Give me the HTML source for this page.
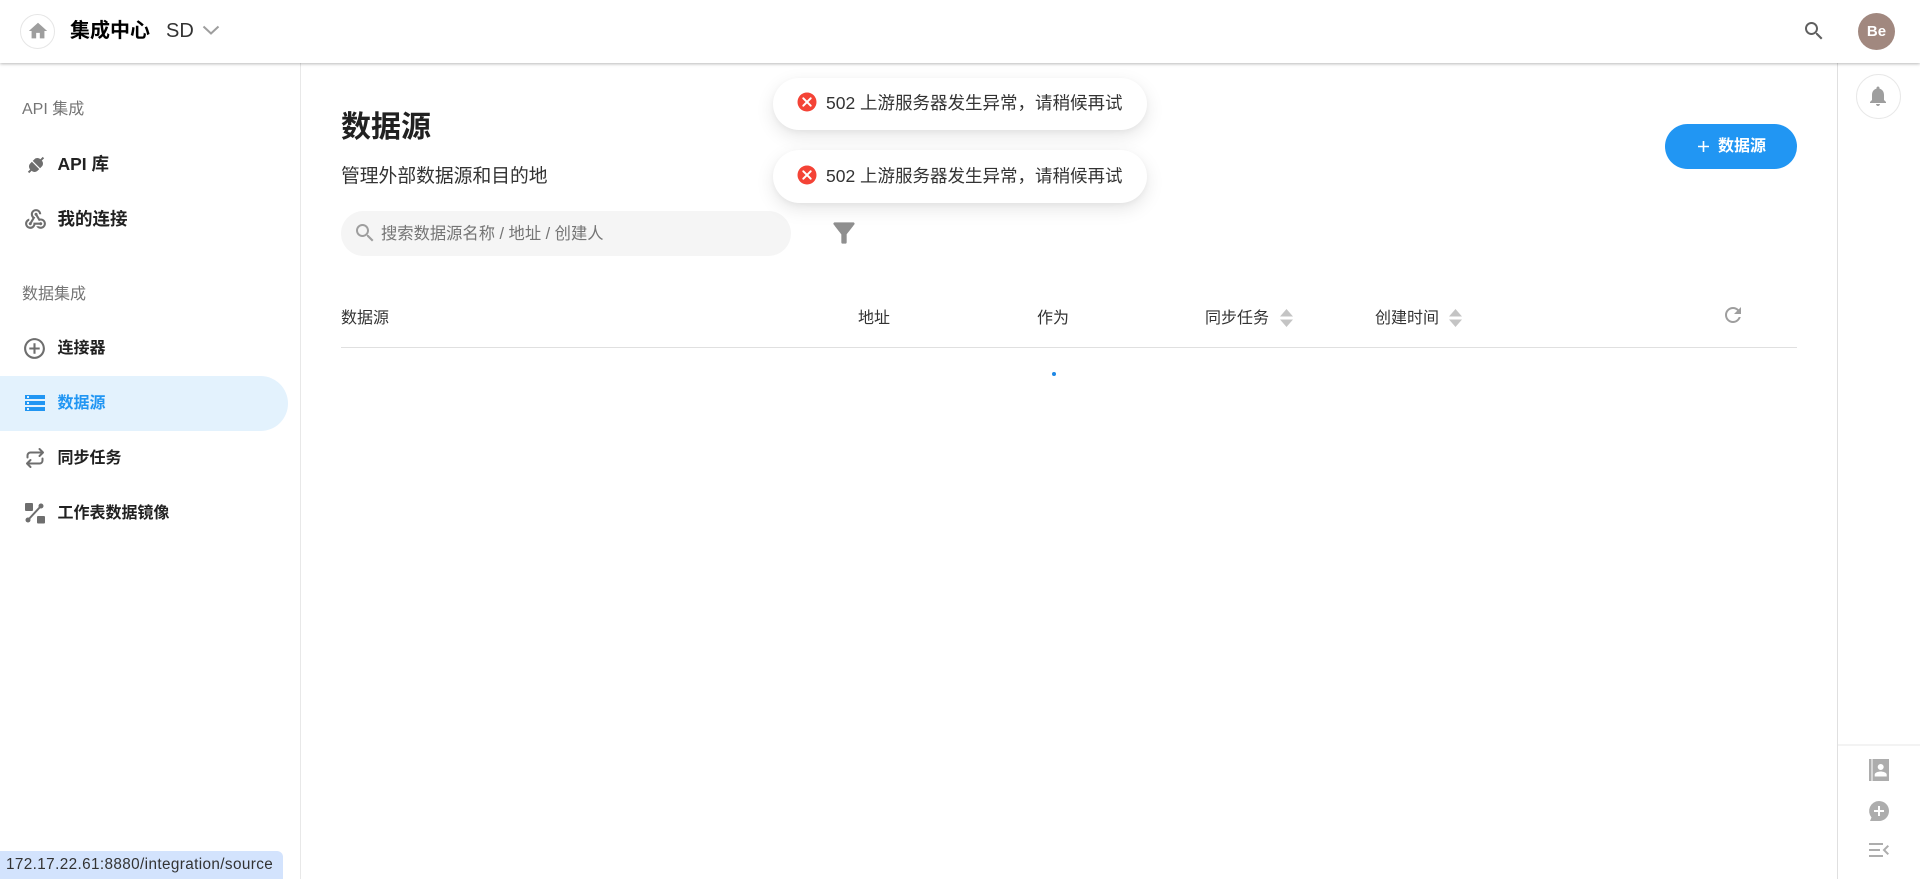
<!DOCTYPE html>
<html lang="zh-CN"><head><meta charset="utf-8"><title>数据源</title>
<style>
html,body{margin:0;padding:0;width:1920px;height:879px;overflow:hidden;background:#fff}
body{position:relative;font-family:"Liberation Sans","Noto Sans CJK SC",sans-serif;color:#212121}
.a{position:absolute}
.t{position:absolute;white-space:nowrap;line-height:24px;height:24px}
svg{position:absolute;display:block;overflow:visible}
.b{font-weight:700}
.n{font-size:16px;font-weight:700;left:57.5px;color:#212121}
.h{font-size:16px;color:#333;top:307px}
.toast{position:absolute;left:773px;width:374px;background:#fff;border-radius:27px;box-shadow:0 6px 18px rgba(0,0,0,.1),0 2px 6px rgba(0,0,0,.04)}
</style></head><body>

<!-- sidebar -->
<div class="a" style="left:300px;top:63px;width:1px;height:816px;background:#e8e8e8"></div>
<div class="a" style="left:1837px;top:63px;width:1px;height:816px;background:#e0e0e0"></div>
<div class="a" style="left:1838px;top:744px;width:82px;height:2px;background:#f3f3f3"></div>
<div class="a" style="left:0;top:376px;width:288px;height:55px;background:#e3f2fd;border-radius:0 27.5px 27.5px 0"></div>

<!-- header -->
<div class="a" style="left:0;top:0;width:1920px;height:63px;background:#fff;box-shadow:0 1px 3px rgba(0,0,0,.28)"></div>
<div class="a" style="left:20px;top:14px;width:33px;height:33px;border:1px solid #e6e6e6;border-radius:50%"></div>
<svg style="left:26.5px;top:20px" width="22" height="22" viewBox="0 0 24 24" fill="#9e9e9e"><path d="M10 20v-6h4v6h5v-8h3L12 3 2 12h3v8z"/></svg>
<div class="t b" style="left:70px;top:19px;font-size:20px;color:#000">集成中心</div>
<div class="t" style="left:166px;top:19px;font-size:20px;color:#333">SD</div>
<svg style="left:202px;top:24px" width="18" height="12" viewBox="0 0 18 12" fill="none" stroke="#9e9e9e" stroke-width="2"><path d="M1.500 2.500 9 9.500l7.500-7"/></svg>
<svg style="left:1802px;top:19px" width="24" height="24" viewBox="0 0 24 24" fill="#5f5f5f"><path d="M15.500 14h-.79l-.28-.27C15.410 12.590 16 11.110 16 9.500 16 5.910 13.090 3 9.500 3S3 5.910 3 9.500 5.910 16 9.500 16c1.610 0 3.090-.59 4.230-1.570l.27.28v.79l5 4.990L20.490 19l-4.990-5zm-6 0C7.010 14 5 11.990 5 9.500S7.010 5 9.500 5 14 7.010 14 9.500 11.990 14 9.500 14z"/></svg>
<div class="a" style="left:1858px;top:13px;width:37px;height:37px;border-radius:50%;background:#a1887f;color:#fff;font-size:15px;font-weight:700;line-height:37px;text-align:center">Be</div>

<!-- nav -->
<div class="t" style="left:22px;top:98px;font-size:16px;color:#757575">API 集成</div>
<svg style="left:24px;top:153px" width="24" height="24" viewBox="0 0 24 24" fill="#6e6e6e"><g transform="rotate(45 12 12)"><path d="M6.800 11.400V9C6.800 6.500 9 4.800 11 4.800V1.500h2v3.300C15 4.800 17.200 6.500 17.200 9v2.400z"/><path d="M6.800 12.600V15C6.800 17.500 9 19.200 11 19.200v3.300h2v-3.300C15 19.200 17.200 17.500 17.200 15v-2.400z"/></g></svg>
<div class="t n" style="top:152px;font-size:17.5px">API 库</div>
<svg style="left:23px;top:207px" width="25" height="25" viewBox="0 0 24 24" fill="#6e6e6e"><path d="M10 15h5.880c.27-.31.67-.5 1.120-.5.83 0 1.500.67 1.500 1.500s-.67 1.500-1.500 1.500c-.44 0-.84-.19-1.120-.5H11.900c-.46 2.280-2.480 4-4.900 4-2.760 0-5-2.240-5-5 0-2.420 1.720-4.440 4-4.900v2.070c-1.160.41-2 1.530-2 2.830 0 1.650 1.350 3 3 3s3-1.350 3-3v-1zm2.500-11c1.650 0 3 1.350 3 3h2c0-2.760-2.240-5-5-5s-5 2.240-5 5c0 1.430.6 2.710 1.550 3.620l-2.350 3.900c-.68.14-1.200.75-1.200 1.480 0 .83.67 1.500 1.500 1.500s1.500-.67 1.500-1.500c0-.16-.02-.31-.07-.45l3.380-5.630C10.490 9.610 9.500 8.420 9.500 7c0-1.650 1.350-3 3-3zm4.500 9c-.64 0-1.230.2-1.720.54l-3.050-5.070C11.530 8.350 11 7.740 11 7c0-.83.67-1.500 1.500-1.500S14 6.170 14 7c0 .15-.02.29-.06.43l2.190 3.650c.28-.05.57-.08.87-.08 2.760 0 5 2.240 5 5s-2.240 5-5 5c-1.850 0-3.470-1.010-4.330-2.500h2.670c.48.32 1.050.5 1.660.5 1.650 0 3-1.350 3-3s-1.350-3-3-3z"/></svg>
<div class="t n" style="top:207px;font-size:17.5px">我的连接</div>

<div class="t" style="left:22px;top:283px;font-size:16px;color:#757575">数据集成</div>
<svg style="left:22px;top:335.500px" width="25" height="25" viewBox="0 0 24 24" fill="#6e6e6e"><path d="M13 7h-2v4H7v2h4v4h2v-4h4v-2h-4V7zm-1-5C6.480 2 2 6.480 2 12s4.480 10 10 10 10-4.480 10-10S17.520 2 12 2zm0 18c-4.410 0-8-3.590-8-8s3.590-8 8-8 8 3.590 8 8-3.590 8-8 8z"/></svg>
<div class="t n" style="top:337px">连接器</div>
<svg style="left:23px;top:391px" width="24" height="24" viewBox="0 0 24 24" fill="#2196f3"><path d="M2 20h20v-4H2v4zm2-3h2v2H4v-2zM2 4v4h20V4H2zm4 3H4V5h2v2zm-4 7h20v-4H2v4zm2-3h2v2H4v-2z"/></svg>
<div class="t n" style="top:392px;color:#2196f3">数据源</div>
<svg style="left:23px;top:446px" width="24" height="24" viewBox="0 0 24 24" fill="none" stroke="#6e6e6e" stroke-width="2" stroke-linecap="round" stroke-linejoin="round"><path d="M4.500 11.500V9.500a3 3 0 0 1 3-3h12M16.500 3l3.500 3.500-3.500 3.500M19.500 12.500v2a3 3 0 0 1-3 3h-12M7.500 21 4 17.500 7.500 14"/></svg>
<div class="t n" style="top:447px">同步任务</div>
<svg style="left:24px;top:502px" width="23" height="23" viewBox="0 0 23 23" fill="#6e6e6e"><rect x="1" y="1" width="8" height="8" rx="1"/><rect x="13" y="14" width="8" height="7.500" rx="1"/><path d="M4 18 17 4" stroke="#6e6e6e" stroke-width="2"/><circle cx="4" cy="18" r="2.500"/><circle cx="17" cy="4" r="2.500"/></svg>
<div class="t n" style="top:502px">工作表数据镜像</div>

<!-- main -->
<div class="t b" style="left:341px;top:112px;font-size:30px;height:32px;line-height:32px;color:#212121">数据源</div>
<div class="t" style="left:341px;top:164px;font-size:18.800px;color:#333">管理外部数据源和目的地</div>
<div class="a" style="left:341px;top:211px;width:450px;height:45px;border-radius:23px;background:#f5f5f5"></div>
<svg style="left:353px;top:221px" width="24" height="24" viewBox="0 0 24 24" fill="#9e9e9e"><path d="M15.500 14h-.79l-.28-.27C15.410 12.590 16 11.110 16 9.500 16 5.910 13.090 3 9.500 3S3 5.910 3 9.500 5.910 16 9.500 16c1.610 0 3.090-.59 4.230-1.570l.27.28v.79l5 4.990L20.490 19l-4.990-5zm-6 0C7.010 14 5 11.990 5 9.500S7.010 5 9.500 5 14 7.010 14 9.500 11.990 14 9.500 14z"/></svg>
<div class="t" style="left:381px;top:222px;font-size:16.300px;color:#757575">搜索数据源名称 / 地址 / 创建人</div>
<svg style="left:828px;top:217px" width="32" height="32" viewBox="0 0 24 24" fill="#8f8f8f"><path d="M4.250 5.610C6.270 8.200 10 13 10 13v6c0 .55.45 1 1 1h2c.55 0 1-.45 1-1v-6s3.720-4.800 5.740-7.390C20.250 4.950 19.780 4 18.950 4H5.040c-.83 0-1.300.95-.79 1.610z"/></svg>

<div class="a" style="left:1665px;top:124px;width:132px;height:45px;border-radius:23px;background:#2196f3"></div>
<svg style="left:1698px;top:141px" width="11" height="11" viewBox="0 0 11 11" fill="#fff"><path d="M4.700 0h1.600v4.700H11v1.600H6.300V11H4.700V6.300H0V4.700h4.700z"/></svg>
<div class="t b" style="left:1718px;top:135px;font-size:16px;color:#fff">数据源</div>

<!-- table header -->
<div class="t h" style="left:341px">数据源</div>
<div class="t h" style="left:858px">地址</div>
<div class="t h" style="left:1037px">作为</div>
<div class="t h" style="left:1205px">同步任务</div>
<svg style="left:1280px;top:309px" width="13" height="18" viewBox="0 0 13 18" fill="#c4c4c4"><path d="M6.500 0 13 7.500H0zM0 10.500h13L6.500 18z"/></svg>
<div class="t h" style="left:1375px">创建时间</div>
<svg style="left:1449px;top:309px" width="13" height="18" viewBox="0 0 13 18" fill="#c4c4c4"><path d="M6.500 0 13 7.500H0zM0 10.500h13L6.500 18z"/></svg>
<svg style="left:1721px;top:303px" width="24" height="24" viewBox="0 0 24 24" fill="#9e9e9e"><path d="M17.650 6.350C16.200 4.900 14.210 4 12 4c-4.420 0-7.990 3.580-7.990 8s3.570 8 7.990 8c3.730 0 6.840-2.550 7.730-6h-2.080c-.82 2.330-3.040 4-5.650 4-3.310 0-6-2.690-6-6s2.690-6 6-6c1.660 0 3.140.69 4.220 1.780L13 11h7V4l-2.350 2.350z"/></svg>
<div class="a" style="left:341px;top:347px;width:1456px;height:1px;background:#e0e0e0"></div>
<div class="a" style="left:1052px;top:372px;width:4px;height:4px;border-radius:50%;background:#1e88e5"></div>

<!-- toasts -->
<div class="toast" style="top:78px;height:52px"></div>
<div class="toast" style="top:150px;height:53px"></div>
<svg style="left:796px;top:91px" width="22" height="22" viewBox="0 0 22 22"><circle cx="11" cy="11" r="9.500" fill="#f44336"/><path d="M7.300 7.300l7.400 7.400M14.700 7.300l-7.400 7.400" stroke="#fff" stroke-width="2" stroke-linecap="round"/></svg>
<div class="t" style="left:826px;top:91px;font-size:17.500px;color:#333">502 上游服务器发生异常，请稍候再试</div>
<svg style="left:796px;top:164px" width="22" height="22" viewBox="0 0 22 22"><circle cx="11" cy="11" r="9.500" fill="#f44336"/><path d="M7.300 7.300l7.400 7.400M14.700 7.300l-7.400 7.400" stroke="#fff" stroke-width="2" stroke-linecap="round"/></svg>
<div class="t" style="left:826px;top:164px;font-size:17.500px;color:#333">502 上游服务器发生异常，请稍候再试</div>

<!-- right rail -->
<div class="a" style="left:1856px;top:74px;width:43px;height:43px;border:1px solid #e8e8e8;border-radius:50%"></div>
<svg style="left:1866px;top:84px" width="24" height="24" viewBox="0 0 24 24" fill="#9e9e9e"><path d="M12 22c1.100 0 2-.9 2-2h-4c0 1.100.89 2 2 2zm6-6v-5c0-3.070-1.640-5.640-4.500-6.320V4c0-.83-.67-1.500-1.500-1.500s-1.500.67-1.500 1.500v.68C7.630 5.360 6 7.920 6 11v5l-2 2v1h16v-1l-2-2z"/></svg>
<svg style="left:1869px;top:759px" width="20" height="22" viewBox="0 0 20 22" fill="#adadad"><path fill-rule="evenodd" d="M0 0h2.500v22H0zM3.500 0H20v22H3.500zM11.700 5a3 3 0 1 0 0 6 3 3 0 0 0 0-6zM5.700 17.500h12v-2c0-2-4-3-6-3s-6 1-6 3z"/></svg>
<svg style="left:1868px;top:800px" width="22" height="22" viewBox="0 0 22 22" fill="#adadad"><path fill-rule="evenodd" d="M11 1a10 10 0 0 1 0 20H2l1.500-3.500A10 10 0 0 1 11 1zM10 6v4H6v2h4v4h2v-4h4v-2h-4V6z"/></svg>
<svg style="left:1867px;top:838px" width="24" height="24" viewBox="0 0 24 24" fill="#adadad"><path d="M2 19h14v-2H2v2zm0-6h11v-2H2v2zm0-8v2h14V5H2zm20 10.590L18.420 12 22 8.410 20.590 7l-5 5 5 5L22 15.590z"/></svg>

<!-- status bubble -->
<div class="a" style="left:0;top:851px;width:283px;height:28px;background:#d3e3fd;border-radius:0 6px 0 0"></div>
<div class="t" style="left:6px;top:853px;font-size:15.300px;letter-spacing:.38px;color:#333">172.17.22.61:8880/integration/source</div>
</body></html>
